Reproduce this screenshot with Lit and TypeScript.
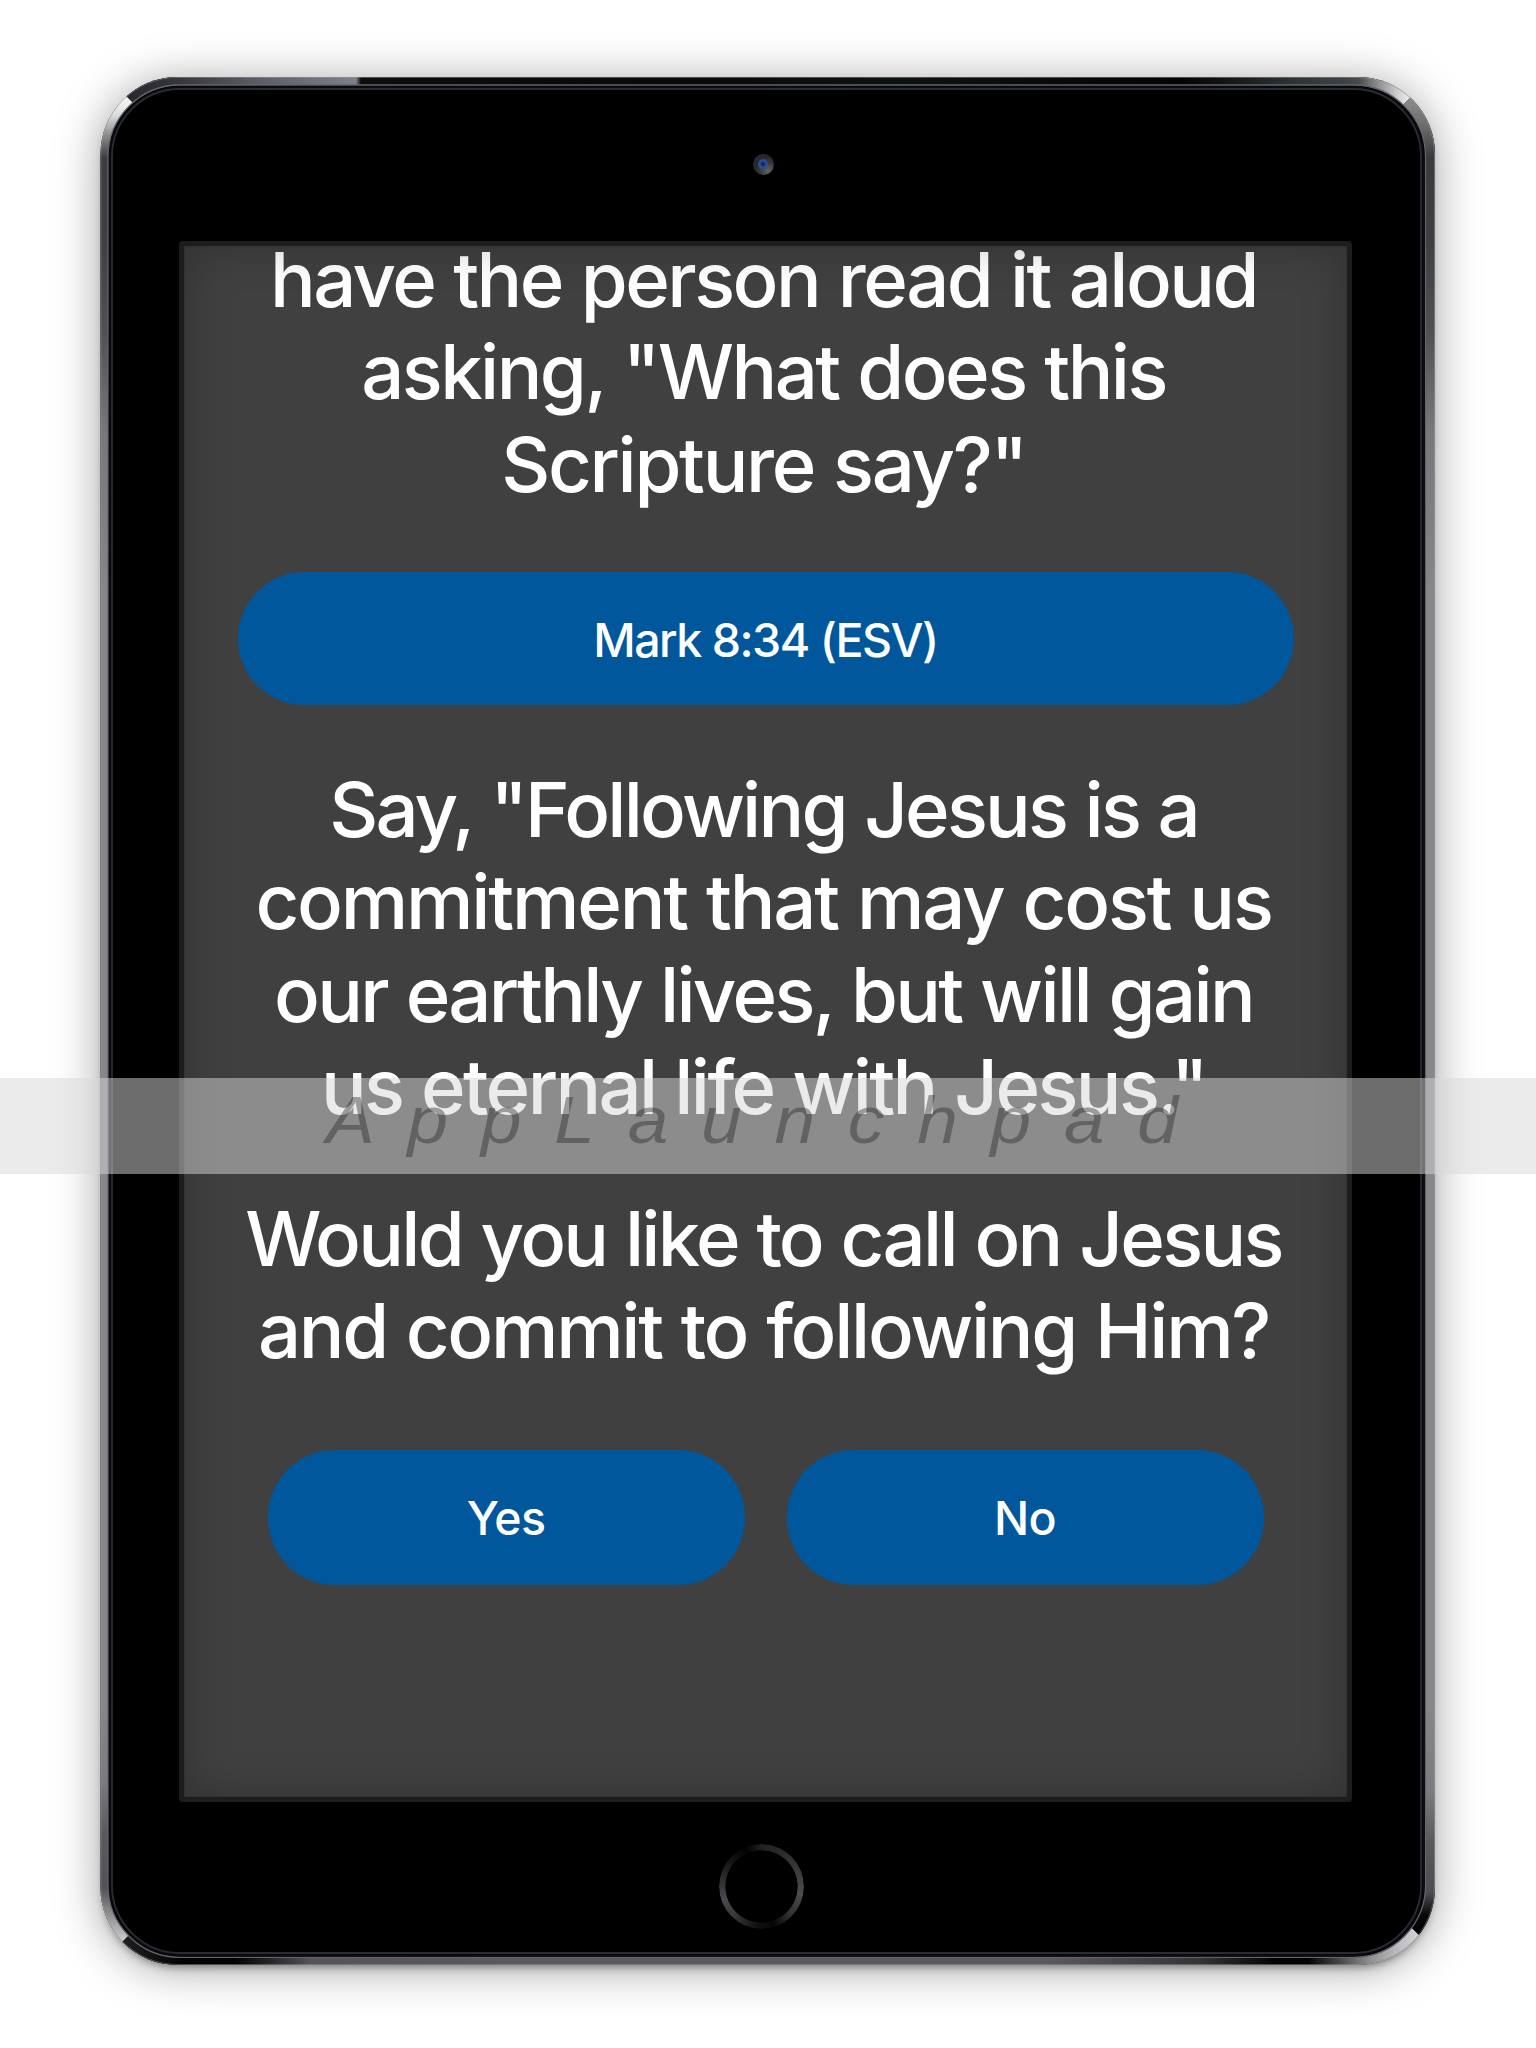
import { LitElement, html, css, svg } from "lit";
import { customElement, property } from "lit/decorators.js";
import { styleMap } from "lit/directives/style-map.js";

type Stop = [number, string];
interface Line {
  text: string;
  tracking: number;
}

/* Gradient along one side of the metal rim; stops are given in page pixels. */
const rimGradient = (id: string, vertical: boolean, stops: Stop[]) => {
  const start = stops[0][0];
  const end = stops[stops.length - 1][0];
  return svg`<linearGradient id=${id} gradientUnits="userSpaceOnUse"
      x1=${vertical ? 0 : start} x2=${vertical ? 0 : end}
      y1=${vertical ? start : 0} y2=${vertical ? end : 0}>
    ${stops.map(([at, color]) => svg`<stop offset=${(at - start) / (end - start)} stop-color=${color}></stop>`)}
  </linearGradient>`;
};

const TOP: Stop[] = [
  [126, "#26282b"], [175, "#34353a"], [250, "#575a62"], [310, "#6c707a"], [356, "#7c808b"], [361, "#0c0c0c"],
  [700, "#08090a"], [900, "#0c130f"], [1180, "#030303"], [1235, "#151919"], [1290, "#2c3134"], [1345, "#3c4245"],
  [1358, "#46494b"], [1380, "#949494"], [1398, "#d0d0d0"], [1411, "#f0f0f0"],
];
const BOTTOM: Stop[] = [
  [122, "#1e1f21"], [165, "#0c0c0c"], [185, "#020202"], [235, "#020202"], [262, "#1c1c1e"], [310, "#55525a"],
  [500, "#5a575e"], [1050, "#5a575e"], [1200, "#343437"], [1275, "#020202"], [1308, "#020202"], [1340, "#48484a"],
  [1370, "#8e8e90"], [1400, "#bfbec2"], [1419, "#d4d4d8"],
];
const LEFT: Stop[] = [
  [97, "#f6f8f8"], [115, "#dcdede"], [135, "#8c8e8e"], [158, "#3c3b3f"], [240, "#3f3e43"], [330, "#4f4f54"],
  [430, "#77777c"], [600, "#87868a"], [1700, "#87868a"], [1780, "#7c7b81"], [1835, "#5a595e"], [1888, "#525157"],
  [1908, "#828284"], [1942, "#cdcdcf"],
];
const RIGHT: Stop[] = [
  [97, "#8e8e8e"], [125, "#6d6d6d"], [158, "#3a393c"], [240, "#3f3e43"], [330, "#4f4f54"], [430, "#77777c"],
  [600, "#87868a"], [1700, "#87868a"], [1790, "#7c7b80"], [1845, "#58575c"], [1892, "#4f4e53"], [1915, "#080808"],
  [1935, "#000"],
];

@customElement("tablet-rim")
class TabletRim extends LitElement {
  static styles = css`
    :host { display: block; }
    .rim { display: block; width: 100%; height: 100%; }
  `;
  render() {
    return html`<svg class="rim" viewBox="100 77 1335 1888" preserveAspectRatio="none" aria-hidden="true">
      <defs>
        ${rimGradient("top", false, TOP)}
        ${rimGradient("bottom", false, BOTTOM)}
        ${rimGradient("left", true, LEFT)}
        ${rimGradient("right", true, RIGHT)}
        <clipPath id="body"><rect x="100.4" y="77" width="1334.6" height="1888" rx="77"></rect></clipPath>
      </defs>
      <g clip-path="url(#body)">
        <rect x="100" y="77" width="1335" height="1888" fill="#000"></rect>
        <polygon points="90,60 150,120 1388,120 1448,60" fill="url(#top)"></polygon>
        <polygon points="83.7,1980 151.7,1912 1396,1912 1464,1980" fill="url(#bottom)"></polygon>
        <polygon points="90,60 150,120 150,1914 90,1974" fill="url(#left)"></polygon>
        <polygon points="1448,60 1388,120 1388,1904 1450,1966" fill="url(#right)"></polygon>
        <rect x="100.9" y="77.5" width="1333.6" height="1887" rx="76.5" fill="none" stroke="#a0a0a0" stroke-opacity=".45"></rect>
      </g>
      <rect x="108" y="85" width="1317.5" height="1872.3" rx="72" fill="#000" stroke="#66636b" stroke-width="1.3"></rect>
      <rect x="109.2" y="86.2" width="1315" height="1870" rx="71" fill="#0a0b10"></rect>
      <rect x="112" y="89" width="1309" height="1864" rx="68" fill="#000" stroke="#292c32" stroke-width="1.8"></rect>
      <rect x="113.3" y="90.3" width="1306.4" height="1861.4" rx="67" fill="#000"></rect>
    </svg>`;
  }
}

@customElement("prompt-text")
class PromptText extends LitElement {
  static styles = css`
    :host { display: block; }
    .text {
      display: flex; flex-direction: column; align-items: center; margin: 0; padding-right: 4px;
      font: 500 76px/92.4px Inter, "Liberation Sans", sans-serif; color: #fff; white-space: pre; word-spacing: 1px;
    }
    .line { display: block; }
  `;
  @property({ attribute: false }) lines: Line[] = [];
  render() {
    return html`<p class="text">${this.lines.map(
      (l) => html`<span class="line" style=${styleMap({ letterSpacing: `${l.tracking}px` })}>${l.text}</span>`
    )}</p>`;
  }
}

@customElement("pill-button")
class PillButton extends LitElement {
  static styles = css`
    :host { display: block; }
    .pill {
      display: flex; align-items: center; justify-content: center; box-sizing: border-box;
      width: 100%; height: 100%; padding: 2px 0 0; border: 0; border-radius: 67px; background: #00579c; color: #fff;
      font: 500 46.5px/56px Inter, "Liberation Sans", sans-serif; letter-spacing: var(--pill-tracking, -.7px);
    }
  `;
  render() {
    return html`<button class="pill"><slot></slot></button>`;
  }
}

@customElement("app-root")
class AppRoot extends LitElement {
  static styles = css`
    :host { display: block; }
    .page {
      position: relative; box-sizing: border-box; width: 1536px; height: 2048px; padding: 77px 101px 83px 100px;
      overflow: hidden; background: #fff;
    }
    .tablet {
      position: relative; display: flex; flex-direction: column; align-items: center; height: 1888px;
      border-radius: 77px;
      box-shadow: 0 4px 46px rgba(0, 0, 0, .36), 0 6px 9px -4px rgba(0, 0, 0, .4);
    }
    .rim { position: absolute; inset: 0; }
    .bezel { position: relative; display: flex; align-items: center; justify-content: center; width: 100%; height: 164px; box-sizing: border-box; }
    .bezel.upper { padding: 11px 8px 0 0; }
    .bezel.lower { height: 163px; padding: 5px 12px 0 0; }
    .camera {
      display: flex; align-items: center; justify-content: center; width: 21px; height: 21px; border-radius: 50%;
      background: radial-gradient(circle at 72% 80%, #626262 0, #3a3a3a 35%, #262627 60%, #303030 100%);
    }
    .lens { width: 10px; height: 10px; margin: -2px 1px 0 0; border-radius: 50%; background: radial-gradient(circle, #16285c 0 20%, #2e4f9e 45%, #27438c 100%); }
    .home {
      width: 85px; height: 85px; border-radius: 50%;
      background: conic-gradient(#202022 0deg, #303032 45deg, #4b4a4f 100deg, #323234 135deg, #060606 162deg, #101011 185deg, #3a3a3d 225deg, #4a494e 250deg, #29292b 285deg, #141415 310deg, #020202 338deg, #202022 360deg);
      -webkit-mask: radial-gradient(circle, transparent 35.7px, #000 36.5px);
      mask: radial-gradient(circle, transparent 35.7px, #000 36.5px);
    }
    .screen {
      position: relative; box-sizing: border-box; width: 1173px; height: 1561px; margin-right: 4px;
      border: 5px solid #1d1d1d; border-radius: 4px; background: #404040; overflow: hidden;
    }
    .screen::after {
      content: ""; position: absolute; inset: 0; pointer-events: none;
      box-shadow: inset 0 0 46px rgba(0, 0, 0, .24), inset 0 0 2px rgba(0, 0, 0, .3);
    }
    .content { display: flex; flex-direction: column; margin-top: -13px; }
    .verse { --pill-tracking: -1.5px; width: 1056px; height: 133px; margin: 62px 0 57.5px 53.5px; }
    .question { margin-top: 59.5px; }
    .answers { display: grid; grid-template-columns: 477px 477px; gap: 42px; height: 135px; margin: 73px 0 0 83.5px; }
    .banner {
      position: absolute; left: 0; top: 1078px; display: flex; width: 1536px; height: 96px; box-sizing: border-box;
      padding: 5px 0 0 326px; background: rgba(215, 215, 215, .506);
    }
    .mark {
      font: italic 400 66.4px/74px "Liberation Sans", Arial, sans-serif; letter-spacing: 29.8px; color: rgba(38, 32, 35, .4);
      transform: scaleX(1.1); transform-origin: 0 0; white-space: pre;
    }
  `;

  private intro: Line[] = [
    { text: "have the person read it aloud", tracking: -2.52 },
    { text: 'asking, "What does this', tracking: -2.55 },
    { text: 'Scripture say?"', tracking: -2.3 },
  ];
  private statement: Line[] = [
    { text: 'Say, "Following Jesus is a', tracking: -2.8 },
    { text: "commitment that may cost us", tracking: -2.2 },
    { text: "our earthly lives, but will gain", tracking: -2.66 },
    { text: 'us eternal life with Jesus."', tracking: -2.6 },
  ];
  private question: Line[] = [
    { text: "Would you like to call on Jesus", tracking: -2.7 },
    { text: "and commit to following Him?", tracking: -2.3 },
  ];

  render() {
    return html`<div class="page">
      <div class="tablet">
        <tablet-rim class="rim"></tablet-rim>
        <div class="bezel upper"><div class="camera"><div class="lens"></div></div></div>
        <main class="screen">
          <div class="content">
            <prompt-text .lines=${this.intro}></prompt-text>
            <pill-button class="verse">Mark 8:34 (ESV)</pill-button>
            <prompt-text .lines=${this.statement}></prompt-text>
            <prompt-text class="question" .lines=${this.question}></prompt-text>
            <div class="answers">
              <pill-button>Yes</pill-button>
              <pill-button>No</pill-button>
            </div>
          </div>
        </main>
        <div class="bezel lower"><div class="home"></div></div>
      </div>
      <div class="banner"><span class="mark">AppLaunchpad</span></div>
    </div>`;
  }
}
